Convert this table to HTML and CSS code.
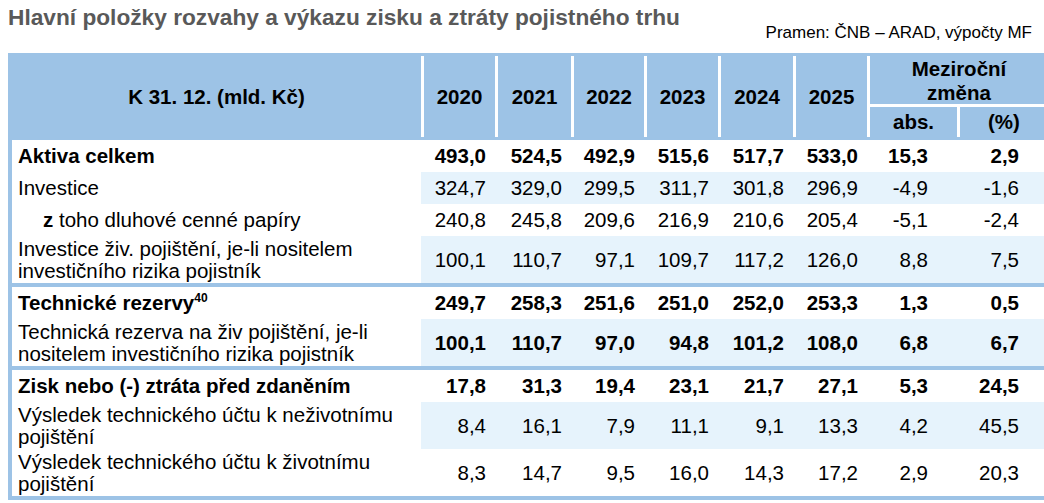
FILE: index.html
```html
<!DOCTYPE html>
<html lang="cs">
<head>
<meta charset="utf-8">
<title>Hlavní položky rozvahy a výkazu zisku a ztráty pojistného trhu</title>
<link rel="stylesheet" href="styles.css">
</head>
<body>
<div class="page">
  <div class="top">
    <h1 class="title">Hlavní položky rozvahy a výkazu zisku a ztráty pojistného trhu</h1>
    <div class="source">Pramen: ČNB – ARAD, výpočty MF</div>
  </div>
  <div class="table">
    <div class="thead">
      <div class="th span2 first"><div class="in">K 31. 12. (mld. Kč)</div></div>
      <div class="th span2"><div class="in">2020</div></div>
      <div class="th span2"><div class="in">2021</div></div>
      <div class="th span2"><div class="in">2022</div></div>
      <div class="th span2"><div class="in">2023</div></div>
      <div class="th span2"><div class="in">2024</div></div>
      <div class="th span2"><div class="in">2025</div></div>
      <div class="th change"><div class="in two">Meziroční<br>změna</div></div>
      <div class="th sub abs"><div class="in">abs.</div></div>
      <div class="th sub pct"><div class="in">(%)</div></div>
    </div>
    <div class="tbody">
      <div class="group">
        <div class="row single bold">
          <div class="td lbl">Aktiva celkem</div>
          <div class="td">493,0</div><div class="td">524,5</div><div class="td">492,9</div><div class="td">515,6</div><div class="td">517,7</div><div class="td">533,0</div><div class="td ch">15,3</div><div class="td ch">2,9</div>
        </div>
        <div class="row single alt">
          <div class="td lbl">Investice</div>
          <div class="td">324,7</div><div class="td">329,0</div><div class="td">299,5</div><div class="td">311,7</div><div class="td">301,8</div><div class="td">296,9</div><div class="td ch">-4,9</div><div class="td ch">-1,6</div>
        </div>
        <div class="row single">
          <div class="td lbl indent"><span><b>z</b> toho dluhové cenné papíry</span></div>
          <div class="td">240,8</div><div class="td">245,8</div><div class="td">209,6</div><div class="td">216,9</div><div class="td">210,6</div><div class="td">205,4</div><div class="td ch">-5,1</div><div class="td ch">-2,4</div>
        </div>
        <div class="row double alt">
          <div class="td lbl"><span>Investice živ. pojištění, je-li nositelem<br>investičního rizika pojistník</span></div>
          <div class="td">100,1</div><div class="td">110,7</div><div class="td">97,1</div><div class="td">109,7</div><div class="td">117,2</div><div class="td">126,0</div><div class="td ch">8,8</div><div class="td ch">7,5</div>
        </div>
      </div>
      <div class="group">
        <div class="row single bold">
          <div class="td lbl"><span>Technické rezervy<sup class="fn">40</sup></span></div>
          <div class="td">249,7</div><div class="td">258,3</div><div class="td">251,6</div><div class="td">251,0</div><div class="td">252,0</div><div class="td">253,3</div><div class="td ch">1,3</div><div class="td ch">0,5</div>
        </div>
        <div class="row double alt bold-nums">
          <div class="td lbl"><span>Technická rezerva na živ pojištění, je-li<br>nositelem investičního rizika pojistník</span></div>
          <div class="td">100,1</div><div class="td">110,7</div><div class="td">97,0</div><div class="td">94,8</div><div class="td">101,2</div><div class="td">108,0</div><div class="td ch">6,8</div><div class="td ch">6,7</div>
        </div>
      </div>
      <div class="group">
        <div class="row single bold">
          <div class="td lbl">Zisk nebo (-) ztráta před zdaněním</div>
          <div class="td">17,8</div><div class="td">31,3</div><div class="td">19,4</div><div class="td">23,1</div><div class="td">21,7</div><div class="td">27,1</div><div class="td ch">5,3</div><div class="td ch">24,5</div>
        </div>
        <div class="row double alt">
          <div class="td lbl"><span>Výsledek technického účtu k neživotnímu<br>pojištění</span></div>
          <div class="td">8,4</div><div class="td">16,1</div><div class="td">7,9</div><div class="td">11,1</div><div class="td">9,1</div><div class="td">13,3</div><div class="td ch">4,2</div><div class="td ch">45,5</div>
        </div>
        <div class="row double">
          <div class="td lbl"><span>Výsledek technického účtu k životnímu<br>pojištění</span></div>
          <div class="td">8,3</div><div class="td">14,7</div><div class="td">9,5</div><div class="td">16,0</div><div class="td">14,3</div><div class="td">17,2</div><div class="td ch">2,9</div><div class="td ch">20,3</div>
        </div>
      </div>
    </div>
  </div>
</div>
</body>
</html>
```
FILE: styles.css
```css
html, body {
  margin: 0;
  padding: 0;
  overflow: hidden;
  background: #ffffff;
}

body {
  font-family: "Liberation Sans", Arial, sans-serif;
  color: #000000;
}

.page {
  width: 1036px;
  padding-left: 8px;
}

.top {
  display: flex;
  justify-content: space-between;
  align-items: flex-start;
  height: 39px;
  padding: 4px 12px 0 0;
  margin-bottom: 10px;
  width: 1024px;
}

.title {
  margin: 0;
  font-size: 22.7px;
  line-height: 26px;
  font-weight: bold;
  color: #595959;
  white-space: nowrap;
}

.source {
  align-self: flex-end;
  font-size: 17px;
  line-height: 20px;
  white-space: nowrap;
}

.table {
  width: 1036px;
  border-left: 4px solid #9dc3e6;
  font-size: 20.5px;
}

.thead,
.row {
  display: grid;
  grid-template-columns: 409px 74px 76px 73px 74px 75px 74px 90px 91px;
}

.thead {
  grid-template-rows: 51px 36px;
  background: #9dc3e6;
  font-weight: bold;
}

.th {
  display: flex;
  flex-direction: column;
  padding: 3px 0;
}

.th .in {
  flex: 1;
  display: flex;
  align-items: center;
  justify-content: center;
  text-align: center;
  border-left: 3px solid #ffffff;
}

.th.first .in {
  border-left: none;
}

.th.span2 {
  grid-row: 1 / 3;
}

.th.change {
  grid-column: 8 / 10;
  grid-row: 1;
  padding: 3px 0 0;
}

.th .in.two {
  line-height: 24px;
  padding-top: 1px;
}

.th.sub {
  grid-row: 2;
  border-top: 3px solid #ffffff;
  padding: 0 0 3px;
}

.th.abs {
  grid-column: 8;
}

.th.pct {
  grid-column: 9;
}

.group {
  border-bottom: 4px solid #9dc3e6;
}

.row.single {
  height: 32px;
}

.row.double {
  height: 47px;
}

.td {
  display: flex;
  align-items: center;
  justify-content: flex-end;
  padding-right: 9px;
  white-space: nowrap;
}

.td.ch {
  padding-right: 29px;
}

.td.lbl {
  justify-content: flex-start;
  padding-left: 6px;
  padding-right: 0;
  line-height: 22px;
}

.td.indent {
  padding-left: 31px;
}

.row.alt .td:not(.lbl) {
  background: #e6f3fc;
}

.row.bold .td,
.row.bold-nums .td:not(.lbl) {
  font-weight: bold;
}

.fn {
  font-size: 12px;
  line-height: 0;
  vertical-align: 8px;
}
```
